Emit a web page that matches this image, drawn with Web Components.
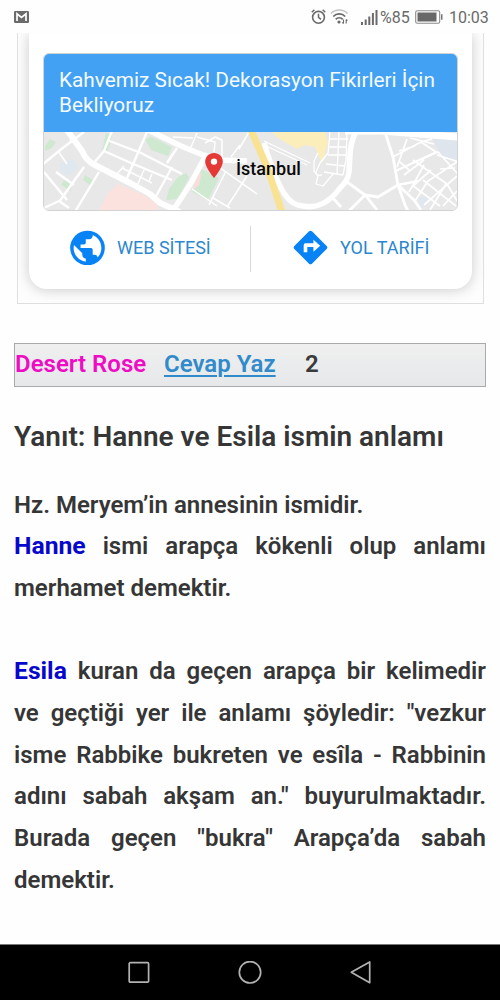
<!DOCTYPE html>
<html lang="tr">
<head>
<meta charset="utf-8">
<title>Hanne ve Esila ismin anlamı</title>
<style>
html,body{margin:0;padding:0;background:#fefefe;font-family:Roboto,"Liberation Sans",sans-serif;overflow:hidden}
</style>
</head>
<body>
<phone-screen></phone-screen>
<script>
const define = (name, html) => customElements.define(name, class extends HTMLElement {
  constructor() {
    super();
    const t = document.createElement('template');
    t.innerHTML = html;
    this.attachShadow({mode: 'open'}).append(t.content.cloneNode(true));
  }
});

define('status-bar', `
<style>
:host{display:flex;height:33px;box-sizing:border-box;padding:0 11px 0 14px;align-items:center;font-size:16px;color:#6a6a6a;background:#fefefe}
svg{display:block;flex:none}
.gap{flex:1}
.time{width:40px;white-space:nowrap}
.pct{width:30px;margin:0 5px 0 2px;white-space:nowrap}
span{position:relative;top:1px}
</style>
<svg width="15" height="12" viewBox="0 0 15 12"><rect width="15" height="12" rx="1.2" fill="#6b6b6b"/><path d="M3 10V2.800l4.500 3.700L12 2.800V10" fill="none" stroke="#fff" stroke-width="1.700"/></svg>
<div class="gap"></div>
<svg width="16" height="17" viewBox="0 0 16 17" fill="none" stroke="#6a6a6a" style="margin-right:-1px"><circle cx="7.500" cy="9.300" r="5.900" stroke-width="1.600"/><path d="M7.500 5.800V9.300l2.500 2M.8 4.300 3.400 1.800M11.700 1.800l2.600 2.500" stroke-width="1.500"/></svg>
<svg width="20" height="17" viewBox="0 0 20 17" style="margin:0 11px 0 4px" fill="none"><path d="M1 5.500c4.500-4.700 12-4.700 16.500 0" stroke="#c4c4c4" stroke-width="1.600"/><path d="M3.200 8.500c3.300-3.400 8.800-3.400 12 0M5.700 11.300c2-2 5-2 7 0" stroke="#6a6a6a" stroke-width="1.700"/><circle cx="9" cy="14" r="1.600" fill="#6a6a6a"/><path d="M13.500 11.500v4M16.200 11.500v4M12.300 14.300l1.200 1.200M16.200 11.500l1.200 1.200" stroke="#6a6a6a" stroke-width="1.100"/></svg>
<svg width="17" height="16" viewBox="0 0 17 16" fill="#6a6a6a"><path d="M0 13h2v3H0zM3.700 10.500h2V16h-2zM7.300 7.500h2V16h-2zM10.900 4h2v12h-2zM14.500 1h2v15h-2z"/></svg>
<span class="pct">%85</span>
<svg width="28" height="14" viewBox="0 0 28 14"><rect x=".7" y=".7" width="24" height="12.600" rx="1.500" fill="#fefefe" stroke="#8b8b8b" stroke-width="1.100"/><rect x="2.500" y="2.500" width="19" height="9" fill="#686868"/><path d="M26 4.200h1.500v5.600H26z" fill="#777"/></svg>
<span class="time" style="margin-left:6px">10:03</span>
`);

define('city-map', `
<style>:host{display:block;height:78px}svg{display:block}</style>
<svg width="413" height="78" viewBox="44 132 413 78">
<rect x="44" y="132" width="413" height="78" fill="#e8e8e9"/>
<g fill="#cfe9d0">
<path d="M45 146l5-7 6 3-4 6-7 3zM106 133l6 2-1 7-4 11-5-3zM145 139l7-2 20 10-4 9-17-6zM178 177l8-4 3 4-11 22-12 1 3-11zM201 169l18 9-11 22-16-8zM64 180l8 4-1 7-10-6zM85 175l10 6-4 5-8-6z"/>
</g>
<path d="M99 210l9-17 10-9 26 11 13 9 1 6z" fill="#fbe2df"/><path d="M196 176l6-4-3 13-6 5z" fill="#f7dedb"/>
<path d="M272 132h53l3 11-6 20-7-16-10-2-8 4-19-11z" fill="#fbeebb"/>
<path d="M433 139l24 0v23l-15-3z" fill="#dfe5ed"/><path d="M60 163l13-4 5 9-9 8-9-5zM418 198l9-3 2 10-9 3z" fill="#e0e8ef"/>
<g fill="none" stroke="#fff" stroke-linejoin="round">
<path stroke-width="6" d="M67 130L82 151Q86 160 93 164L132 184 150 194 160 203 180 212"/>
<path stroke-width="5.500" d="M146 129l35 17 22 9 17 5 27 1M206 155l-15 28-17 26"/>
<path stroke-width="2.400" d="M112 131l-8 20-11 13M84 132l-20 15-21 17M104 151l27 12 41 17M107 140l34 13 41 21M147 132l-20 46M177 148l-10 15M172 167l-18 33M44 172l23 28M56 172l18 13M84 167l-25 35M99 172l-23 38M44 208l15-7 10 7M70 140l10 6"/>
<path stroke-width="1.500" d="M58 151l9 13M122 168l30 15M144 170l-7 16M152 174l-3 7M116 175l8-9M192 189l25 17M216 165l41 29M226 171l-17 34M213 198l17 10M247 176l-20 31M191 147l6-14M197 137l18 5-1 10M205 143l10-6 7 3v18M173 137l20 1M240 145l-9 12M249 132l-10 17"/>
<path stroke-width="1.300" d="M264 141l46 22M264 145l43 20M330 132l-2 21-8 10-4 9q-1 4 6 3M339 132l-2 42M347 132l-1 28-3 15M330 139h18M329 147h18M328 155h18M326 164l19 2M324 172l19 3M318 153l-4 8v10l4 5-2 8 7 2 11-13"/>
<path stroke-width="5.500" d="M357 130q-6 10-7 24l-1 18q-1 9-9 16-16 22-37 18-11-1-17-10-10-13-22-53"/>
<path stroke-width="7" d="M345 131h36l77 6"/>
<path stroke-width="2.800" d="M385 132l8 25 5 28 7 20 4 8M347 182l18 13 13 2 20-12 20-4M365 195l-17 17M366 196l11 14M331 196l10 11M398 185l16 15 7 10"/>
<path stroke-width="1.700" d="M393 157l28-15 15 10-39 18M407 139l-10 28M396 171l42-19 20 22M410 138l24 6M415 146l-16 5M413 160l34 24 12 20M421 142l11-3M424 165l-15 27M437 155l22 7M457 162l-29 19-13 20M404 175l20-15M431 170l-17 15M457 176l-33 29M423 180l33 26M440 169l15-1M446 184l-16 26M412 185l28 21M457 191l-14 15M400 162l9 8"/>
</g>
<path d="M251 130l16 37 15 45" fill="none" stroke="#f9e392" stroke-width="7"/>
</svg>
`);

define('map-place', `
<style>
:host{display:block;position:relative}
.pin{position:absolute;left:160px;top:20px}
b{position:absolute;left:192px;top:26px;font-size:18px;line-height:22px;font-weight:500;color:#080808;white-space:nowrap}
</style>
<city-map></city-map>
<svg class="pin" width="20" height="27" viewBox="0 0 20 27"><path d="M10 1C4.900 1 1.200 4.700 1.200 9.500 1.200 15.600 10 26 10 26s8.800-10.400 8.800-16.500C18.800 4.700 15.100 1 10 1z" fill="#e53935"/><circle cx="10" cy="9.600" r="3.200" fill="#fff"/></svg>
<b><slot></slot></b>
`);

define('action-link', `
<style>
:host{display:flex;align-items:center;font-size:18px;color:#2b87cf;white-space:nowrap}
::slotted(svg){display:block;flex:none;margin-right:12px}
</style><slot></slot>`);

define('ad-card', `
<style>
:host{display:block;width:467px;height:271px;margin-left:16.500px;box-sizing:border-box;border:1px solid #dfdfdf;border-top:0;overflow:hidden;background:#fdfdfd}
.card{margin:0 11px 0 11.500px;height:256px;box-sizing:border-box;background:#fff;border-radius:0 0 18px 18px;box-shadow:0 1px 14px rgba(0,0,0,.2);padding:20px 13.500px 0 14px}
.promo{border:1px solid #d2d2d2;border-radius:6px;overflow:hidden;height:158px;box-sizing:border-box}
.head{height:78px;background:#42a1f2;color:#f4faff;box-sizing:border-box;padding:14px 15px;font-size:20.800px;line-height:25px;white-space:nowrap}
.acts{display:flex;height:47px;margin-top:13px;align-items:center}
.acts action-link:first-child{margin-left:27px;width:180px}
.acts i{width:1px;height:46px;background:#d8d8d8;margin:3px 42px 0 0}
</style>
<div class="card"><div class="promo"><div class="head"><div>Kahvemiz Sıcak! Dekorasyon Fikirleri İçin</div><div>Bekliyoruz</div></div><map-place>İstanbul</map-place></div>
<div class="acts">
<action-link><svg width="35" height="35" viewBox="1.200 .9 21.600 21.600"><path fill="#0883f6" d="M12 1.300A10.700 10.700 0 1 0 12 22.700 10.700 10.700 0 0 0 12 1.300zm-1.070 19.140C6.710 19.900 3.440 16.340 3.440 12c0-.66.080-1.300.230-1.910l5.120 5.120v1.070c0 1.180.960 2.140 2.140 2.140v2.020zm7.380-2.720a2.130 2.130 0 0 0-2.030-1.480h-1.070v-3.210c0-.590-.480-1.070-1.070-1.070H7.720V9.820h2.140c.590 0 1.070-.480 1.070-1.070V6.610h2.140c1.180 0 2.140-.960 2.140-2.140v-.440c3.140 1.270 5.360 4.350 5.360 7.940 0 2.230-.860 4.250-2.260 5.750z"/></svg>WEB SİTESİ</action-link>
<i></i>
<action-link><svg width="35" height="35" viewBox="0 0 36 36"><path fill="#0883f6" d="M16.500 1.400 1.400 16.500q-1.500 1.500 0 3l15.100 15.100q1.500 1.500 3 0l15.100-15.100q1.500-1.500 0-3L19.500 1.400q-1.500-1.500-3 0z"/><path fill="#fff" d="M11 23v-7.500q0-1.800 1.800-1.800h8.200V10l7 6.200-7 6.200v-4.800h-6.300V23z"/></svg>YOL TARİFİ</action-link>
</div></div>`);

define('post-bar', `
<style>
:host{display:flex;align-items:center;margin:39px 14px 0;height:44px;box-sizing:border-box;border:1px solid #aaa;background:linear-gradient(#efefef,#e6e8ea);font-size:24px;font-weight:600;white-space:nowrap}
span{position:relative;top:-1px}
.u{color:#ee0cc4;width:149px}.r{color:#318bcb;width:141px;text-decoration:underline;text-decoration-thickness:1.500px;text-underline-offset:3px}.n{color:#3a3a3a}
</style><span class="u">Desert Rose</span><span class="r">Cevap Yaz</span><span class="n">2</span>`);

define('text-line', `
<style>:host{display:block;height:41.700px;text-align:justify;text-align-last:justify;white-space:normal}
:host([end]){text-align-last:left}</style><slot></slot>`);

define('forum-post', `
<style>
:host{display:block;padding:0 14px;color:#363636;font-weight:600}
h1{margin:34px 0 0;font-size:28px;line-height:32px;font-weight:600;white-space:nowrap}
article{margin-top:31.500px;font-size:24px;line-height:41.700px}
em{font-style:normal;color:#0808cc;font-weight:700;font-size:24.700px;line-height:0}
</style>
<h1>Yanıt: Hanne ve Esila ismin anlamı</h1>
<article>
<text-line end>Hz. Meryem’in annesinin ismidir.</text-line>
<text-line><em>Hanne</em> ismi arapça kökenli olup anlamı</text-line>
<text-line end>merhamet demektir.</text-line>
<text-line></text-line>
<text-line><em>Esila</em> kuran da geçen arapça bir kelimedir</text-line>
<text-line>ve geçtiği yer ile anlamı şöyledir: "vezkur</text-line>
<text-line>isme Rabbike bukreten ve esîla - Rabbinin</text-line>
<text-line>adını sabah akşam an." buyurulmaktadır.</text-line>
<text-line>Burada geçen "bukra" Arapça’da sabah</text-line>
<text-line end>demektir.</text-line>
</article>`);

define('nav-bar', `
<style>:host{display:flex;height:56px;box-sizing:border-box;background:#000;border-top:1px solid #777;justify-content:center;align-items:center;gap:87px}
svg{display:block}</style>
<svg width="24" height="24" viewBox="0 0 24 24" fill="none" stroke="#b2b2b2" stroke-width="1.700"><rect x="2.200" y="1.700" width="19.400" height="19.400" rx="1"/></svg>
<svg width="24" height="24" viewBox="0 0 24 24" fill="none" stroke="#b2b2b2" stroke-width="1.700"><circle cx="12" cy="11.300" r="10.700"/></svg>
<svg width="24" height="24" viewBox="0 0 24 24" fill="none" stroke="#b2b2b2" stroke-width="1.700" stroke-linejoin="round"><path d="M20.700 .9v20.800L2.300 11.300z"/></svg>`);

define('phone-screen', `
<style>:host{display:flex;flex-direction:column;width:500px;height:1000px;overflow:hidden}
status-bar,ad-card,post-bar,nav-bar{flex:none}forum-post{flex:1;min-height:0;overflow:hidden}</style>
<status-bar></status-bar><ad-card></ad-card><post-bar></post-bar><forum-post></forum-post><nav-bar></nav-bar>`);
</script>
</body>
</html>
